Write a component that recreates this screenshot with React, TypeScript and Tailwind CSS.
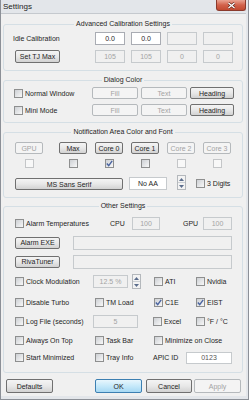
import React from 'react';

type Kids = { children?: React.ReactNode; className?: string };

const Check = ({ checked = false, disabled = false }: { checked?: boolean; disabled?: boolean }) => (
  <span
    className={`flex h-[9px] w-[9px] shrink-0 items-center justify-center border ${
      disabled ? 'border-[#c4c6c8] bg-[#f8f8f8]' : 'border-[#8e8f8f] bg-linear-to-br from-[#cdd0d4] to-[#f8f8f8]'
    }`}
  >
    {checked && (
      <svg width="7" height="7" viewBox="0 0 7 7">
        <path d="M0.8 3.6 L2.7 5.6 L6.2 0.9" fill="none" stroke="#4a64a0" strokeWidth="1.4" />
      </svg>
    )}
  </span>
);

const CheckLabel = ({ label, checked = false, className = '' }: { label: string; checked?: boolean; className?: string }) => (
  <label className={`flex shrink-0 items-center gap-[2px] ${className}`}>
    <Check checked={checked} />
    <span className="whitespace-nowrap">{label}</span>
  </label>
);

const Btn = ({ children, className = '', disabled = false, primary = false }: Kids & { disabled?: boolean; primary?: boolean }) => (
  <button
    className={`flex shrink-0 items-center justify-center rounded-[2px] border leading-none whitespace-nowrap ${
      disabled
        ? 'border-[#b5b9bc] bg-[#f4f4f4] text-[#a3a3a3]'
        : primary
          ? 'border-[#3c7fb1] bg-linear-to-b from-[#e8f6fd] via-[#c6e9fa] to-[#a6d8f3] text-[#1e1e1e]'
          : 'border-[#707070] bg-linear-to-b from-[#f4f4f4] via-[#e8e8e8] to-[#d2d2d2] text-[#1e1e1e]'
    } ${className}`}
  >
    {children}
  </button>
);

const Field = ({ children, className = '', disabled = false }: Kids & { disabled?: boolean }) => (
  <div
    className={`flex shrink-0 items-center justify-center border ${
      disabled ? 'border-[#c6cacd] bg-[#f0f0f0] text-[#a3a3a3]' : 'border-[#a9acb3] bg-white text-[#1e1e1e]'
    } ${className}`}
  >
    {children}
  </div>
);

const Spin = ({ className = '' }: { className?: string }) => (
  <div className={`flex h-[15px] w-[9px] shrink-0 flex-col border border-[#b4b8bc] bg-[#f3f3f3] ${className}`}>
    <div className="flex flex-1 items-center justify-center border-b border-[#ccd0d4]">
      <svg width="5" height="3" viewBox="0 0 5 3">
        <path d="M0 3 L2.5 0 L5 3Z" fill="#5b6d8c" />
      </svg>
    </div>
    <div className="flex flex-1 items-center justify-center">
      <svg width="5" height="3" viewBox="0 0 5 3">
        <path d="M0 0 L2.5 3 L5 0Z" fill="#5b6d8c" />
      </svg>
    </div>
  </div>
);

const Group = ({ title, children, className = '' }: Kids & { title: string }) => (
  <fieldset className={`ml-[2px] mr-[3px] rounded-[3px] border border-[#d5dfe5] ${className}`}>
    <legend className="mx-auto px-[2px] leading-[8px]">{title}</legend>
    {children}
  </fieldset>
);

export default function App() {
  return (
    <div className="flex h-[400px] w-[249px] flex-col border-x border-b border-[#8c9097] bg-[#e3e6ea] font-['Liberation_Sans',Arial,sans-serif] text-[7px] leading-none text-[#1e1e1e]">
      {/* title bar */}
      <div className="flex h-[13px] shrink-0 items-start justify-between pl-[2px] pr-[2px]">
        <span className="pt-[3px] text-[8px]">Settings</span>
        <div className="flex h-[11px] w-[30px] items-center justify-center rounded-b-[3px] border border-t-0 border-[#8b3a2c] bg-linear-to-b from-[#e9a493] via-[#d2624b] to-[#c24a30]">
          <svg width="9" height="7" viewBox="0 0 9 7">
            <path d="M1.5 1 L7.5 6 M7.5 1 L1.5 6" stroke="#5a2418" strokeWidth="2.6" />
            <path d="M1.5 1 L7.5 6 M7.5 1 L1.5 6" stroke="#ffffff" strokeWidth="1.4" />
          </svg>
        </div>
      </div>

      {/* client */}
      <div className="mr-[2px] mb-[3px] flex flex-1 flex-col border-t border-[#c5c9ce] bg-[#f0f0f0]">
        <Group title="Advanced Calibration Settings" className="mt-[6px] pb-[7px]">
          <div className="mt-[4px] flex h-[13px] items-center pl-[9px]">
            <span className="w-[82px] shrink-0">Idle Calibration</span>
            <div className="flex gap-[6px]">
              <Field className="h-[13px] w-[30px]">0.0</Field>
              <Field className="h-[13px] w-[30px]">0.0</Field>
              <Field disabled className="h-[13px] w-[30px]" />
              <Field disabled className="h-[13px] w-[30px]" />
            </div>
          </div>
          <div className="mt-[5px] flex h-[13px] items-center pl-[11px]">
            <Btn className="h-[13px] w-[45px]">Set TJ Max</Btn>
            <div className="ml-[35px] flex gap-[6px]">
              <Field disabled className="h-[13px] w-[30px]">105</Field>
              <Field disabled className="h-[13px] w-[30px]">105</Field>
              <Field disabled className="h-[13px] w-[30px]">0</Field>
              <Field disabled className="h-[13px] w-[30px]">0</Field>
            </div>
          </div>
        </Group>

        <Group title="Dialog Color" className="mt-[5px] pb-[6px]">
          <div className="mt-[3px] flex h-[12px] items-center pl-[10px]">
            <CheckLabel label="Normal Window" className="w-[78px]" />
            <div className="flex gap-[3px]">
              <Btn disabled className="h-[12px] w-[46px]">Fill</Btn>
              <Btn disabled className="h-[12px] w-[46px]">Text</Btn>
              <Btn className="h-[12px] w-[44px]">Heading</Btn>
            </div>
          </div>
          <div className="mt-[5px] flex h-[12px] items-center pl-[10px]">
            <CheckLabel label="Mini Mode" className="w-[78px]" />
            <div className="flex gap-[3px]">
              <Btn disabled className="h-[12px] w-[46px]">Fill</Btn>
              <Btn disabled className="h-[12px] w-[46px]">Text</Btn>
              <Btn className="h-[12px] w-[44px]">Heading</Btn>
            </div>
          </div>
        </Group>

        <Group title="Notification Area Color and Font" className="mt-[5px] pb-[7px]">
          <div className="mt-[6px] flex h-[12px] items-center pl-[11px]">
            <Btn disabled className="h-[12px] w-[28px]">GPU</Btn>
            <div className="ml-[16px] flex gap-[8px]">
              <Btn className="h-[12px] w-[28px]">Max</Btn>
              <Btn className="h-[12px] w-[28px]">Core 0</Btn>
              <Btn className="h-[12px] w-[28px]">Core 1</Btn>
              <Btn disabled className="h-[12px] w-[28px]">Core 2</Btn>
              <Btn disabled className="h-[12px] w-[28px]">Core 3</Btn>
            </div>
          </div>
          <div className="mt-[5px] flex h-[9px] items-center pl-[11px]">
            <div className="flex w-[28px] justify-center"><Check disabled /></div>
            <div className="ml-[16px] flex gap-[8px]">
              <div className="flex w-[28px] justify-center"><Check /></div>
              <div className="flex w-[28px] justify-center"><Check checked /></div>
              <div className="flex w-[28px] justify-center"><Check /></div>
              <div className="flex w-[28px] justify-center"><Check disabled /></div>
              <div className="flex w-[28px] justify-center"><Check disabled /></div>
            </div>
          </div>
          <div className="mt-[7px] flex h-[15px] items-center pl-[11px]">
            <Btn className="mt-[3px] h-[12px] w-[108px]">MS Sans Serif</Btn>
            <Field className="ml-[6px] mt-[2px] h-[13px] w-[38px] border-[#c6cacd] bg-[#f0f0f0]">No AA</Field>
            <Spin className="ml-[10px]" />
            <CheckLabel label="3 Digits" className="ml-[10px] mt-[2px]" />
          </div>
        </Group>

        <Group title="Other Settings" className="mt-[4px] pb-[8px]">
          <div className="mt-[7px] flex h-[13px] items-center pl-[11px]">
            <CheckLabel label="Alarm Temperatures" className="w-[95px]" />
            <span className="w-[22px] shrink-0">CPU</span>
            <Field disabled className="h-[13px] w-[28px]">100</Field>
            <span className="ml-[23px] w-[20px] shrink-0">GPU</span>
            <Field disabled className="h-[13px] w-[29px]">100</Field>
          </div>
          <div className="mt-[6px] flex h-[13px] items-center pl-[11px]">
            <Btn className="h-[12px] w-[45px]">Alarm EXE</Btn>
            <Field disabled className="ml-[13px] h-[14px] w-[159px]" />
          </div>
          <div className="mt-[6px] flex h-[13px] items-center pl-[11px]">
            <Btn className="h-[12px] w-[45px]">RivaTuner</Btn>
            <Field disabled className="ml-[13px] h-[14px] w-[159px]" />
          </div>
          <div className="mt-[7px] flex h-[13px] items-center pl-[11px]">
            <CheckLabel label="Clock Modulation" className="w-[78px]" />
            <Field disabled className="h-[13px] w-[35px]">12.5 %</Field>
            <Spin className="ml-[4px]" />
            <CheckLabel label="ATI" className="ml-[13px] w-[42px]" />
            <CheckLabel label="Nvidia" />
          </div>
          <div className="mt-[8px] flex h-[13px] items-center pl-[11px]">
            <CheckLabel label="Disable Turbo" className="w-[80px]" />
            <CheckLabel label="TM Load" className="w-[59px]" />
            <CheckLabel label="C1E" checked className="w-[42px]" />
            <CheckLabel label="EIST" checked />
          </div>
          <div className="mt-[6px] flex h-[13px] items-center pl-[11px]">
            <CheckLabel label="Log File (seconds)" className="w-[78px]" />
            <Field disabled className="h-[13px] w-[45px]">5</Field>
            <CheckLabel label="Excel" className="ml-[15px] w-[43px]" />
            <CheckLabel label="°F / °C" />
          </div>
          <div className="mt-[6px] flex h-[13px] items-center pl-[11px]">
            <CheckLabel label="Always On Top" className="w-[80px]" />
            <CheckLabel label="Task Bar" className="w-[59px]" />
            <CheckLabel label="Minimize on Close" />
          </div>
          <div className="mt-[4px] flex h-[13px] items-center pl-[11px]">
            <CheckLabel label="Start Minimized" className="w-[80px]" />
            <CheckLabel label="Tray Info" className="w-[58px]" />
            <span className="w-[33px] shrink-0">APIC ID</span>
            <Field className="h-[12px] w-[46px] border-[#c6cacd] bg-[#f0f0f0] text-[#555]">0123</Field>
          </div>
        </Group>

        <div className="mt-[6px] flex h-[14px] items-center pl-[5px]">
          <Btn className="h-[14px] w-[47px]">Defaults</Btn>
          <Btn primary className="ml-[42px] h-[14px] w-[47px]">OK</Btn>
          <Btn className="ml-[4px] h-[14px] w-[46px]">Cancel</Btn>
          <Btn disabled className="ml-[2px] h-[14px] w-[47px]">Apply</Btn>
        </div>
      </div>
    </div>
  );
}
